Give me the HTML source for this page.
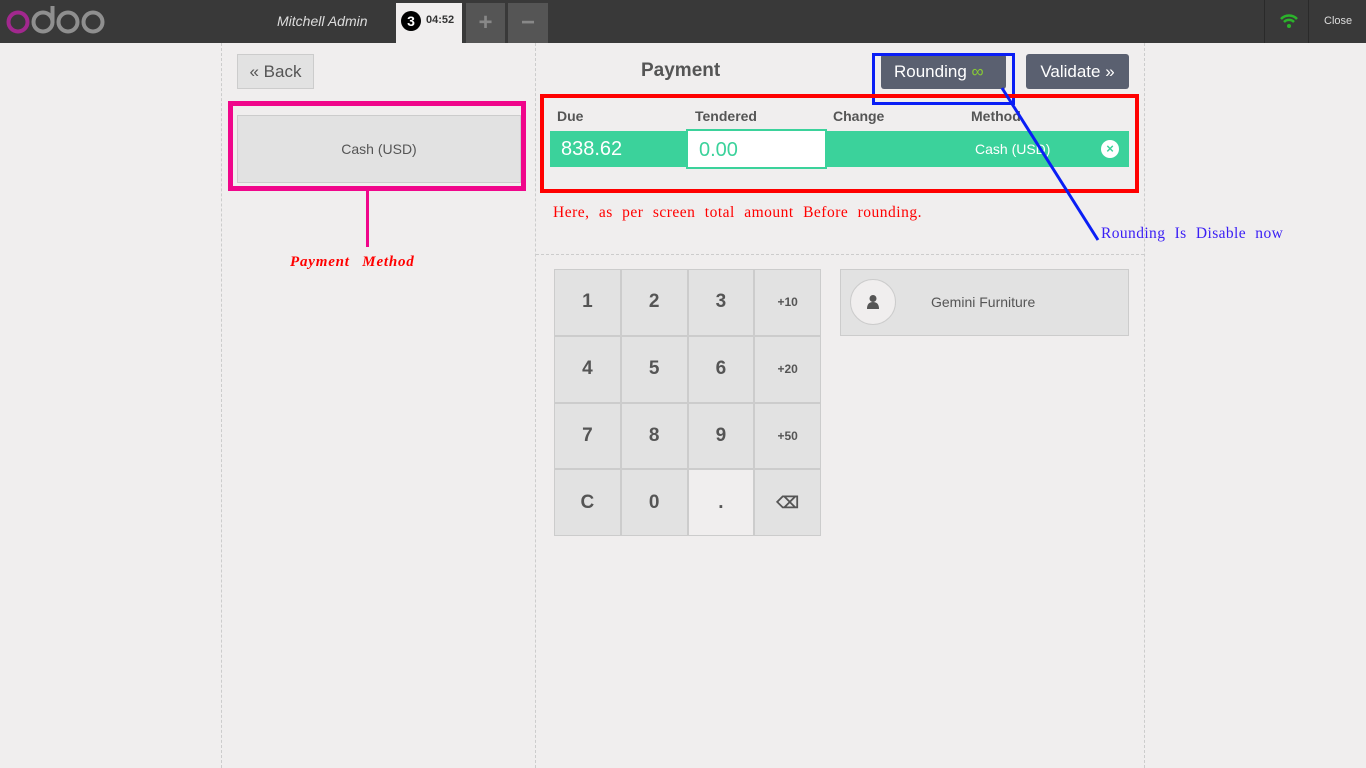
<!DOCTYPE html>
<html><head><style>
*{box-sizing:border-box;margin:0;padding:0}
body{width:1366px;height:768px;background:#f0eeee;font-family:"Liberation Sans",sans-serif;position:relative;overflow:hidden;color:#555}
.a{position:absolute}
.top{left:0;top:0;width:1366px;height:43px;background:#393939}
.key{background:#e2e2e2;border:1px solid #ccc;display:flex;align-items:center;justify-content:center;font-size:19px;font-weight:bold;color:#555}
.serif{font-family:"Liberation Serif",serif}
</style></head><body>
<div class="a top"></div>
<svg class="a" style="left:6px;top:5px" width="100" height="32">
<circle cx="12" cy="17" r="9.5" fill="none" stroke="#a2288e" stroke-width="4"/>
<circle cx="37" cy="17" r="9.5" fill="none" stroke="#8f8f8f" stroke-width="4"/>
<rect x="44.5" y="1" width="4" height="17" fill="#8f8f8f"/>
<circle cx="62" cy="17" r="9.5" fill="none" stroke="#8f8f8f" stroke-width="4"/>
<circle cx="87" cy="17" r="9.5" fill="none" stroke="#8f8f8f" stroke-width="4"/>
</svg>
<div class="a" style="left:277px;top:13px;color:#ddd;font-size:14px;font-style:italic">Mitchell Admin</div>
<div class="a" style="left:396px;top:3px;width:66px;height:40px;background:#f0eeee"></div>
<div class="a" style="left:401px;top:11px;width:20px;height:20px;border-radius:50%;background:#000;color:#fff;font-size:14px;font-weight:bold;text-align:center;line-height:20px">3</div>
<div class="a" style="left:426px;top:14px;font-size:11px;font-weight:bold;color:#333">04:52</div>
<div class="a" style="left:466px;top:3px;width:39px;height:40px;background:#555;color:#888;font-size:24px;font-weight:bold;text-align:center;line-height:40px">+</div>
<div class="a" style="left:508px;top:3px;width:40px;height:40px;background:#555;color:#888;font-size:24px;font-weight:bold;text-align:center;line-height:40px">−</div>
<div class="a" style="left:1264px;top:0;width:1px;height:43px;background:#2a2a2a"></div>
<div class="a" style="left:1308px;top:0;width:1px;height:43px;background:#2a2a2a"></div>
<svg class="a" style="left:1279px;top:13px" width="20" height="16"><path d="M2 6 A11 11 0 0 1 18 6" fill="none" stroke="#2bb32b" stroke-width="2.5"/><path d="M5 9 A7 7 0 0 1 15 9" fill="none" stroke="#2bb32b" stroke-width="2.5"/><circle cx="10" cy="13" r="2" fill="#2bb32b"/></svg>
<div class="a" style="left:1324px;top:15px;color:#ddd;font-size:11px">Close</div>
<div class="a" style="left:221px;top:43px;height:725px;border-left:1px dashed #ccc"></div>
<div class="a" style="left:535px;top:43px;height:725px;border-left:1px dashed #ccc"></div>
<div class="a" style="left:1144px;top:43px;height:725px;border-left:1px dashed #ccc"></div>
<div class="a" style="left:536px;top:254px;width:608px;border-top:1px dashed #ccc"></div>
<div class="a" style="left:237px;top:54px;width:77px;height:35px;background:#e2e2e2;border:1px solid #ccc;font-size:17px;line-height:33px;text-align:center">« Back</div>
<div class="a" style="left:641px;top:60px;font-size:19px;font-weight:bold">Payment</div>
<div class="a" style="left:881px;top:54px;width:125px;height:35px;background:#5a6070;border-radius:3px;color:#fff;font-size:17px;line-height:35px;padding-left:13px">Rounding <span style="color:#8c3">∞</span></div>
<div class="a" style="left:1026px;top:54px;width:103px;height:35px;background:#5a6070;border-radius:3px;color:#fff;font-size:17px;line-height:35px;text-align:center">Validate »</div>
<div class="a" style="left:872px;top:53px;width:143px;height:52px;border:3px solid #0a1ef5"></div>
<div class="a" style="left:237px;top:115px;width:284px;height:68px;background:#e2e2e2;border:1px solid #ccc;font-size:14px;text-align:center;line-height:66px">Cash (USD)</div>
<div class="a" style="left:228px;top:101px;width:298px;height:90px;border:5px solid #f0068b"></div>
<div class="a" style="left:366px;top:191px;width:3px;height:56px;background:#f0068b"></div>
<div class="a serif" style="left:290px;top:254px;color:#f00;font-size:15px;font-style:italic;font-weight:bold;word-spacing:8px;letter-spacing:0.8px">Payment Method</div>
<div class="a" style="left:557px;top:108px;font-size:14px;font-weight:bold">Due</div>
<div class="a" style="left:695px;top:108px;font-size:14px;font-weight:bold">Tendered</div>
<div class="a" style="left:833px;top:108px;font-size:14px;font-weight:bold">Change</div>
<div class="a" style="left:971px;top:108px;font-size:14px;font-weight:bold">Method</div>
<div class="a" style="left:550px;top:131px;width:579px;height:36px;background:#3bd29b"></div>
<div class="a" style="left:561px;top:138px;font-size:20px;color:#fff">838.62</div>
<div class="a" style="left:686px;top:129px;width:141px;height:40px;background:#fff;border:2px solid #3bd29b;font-size:20px;color:#3bd29b;padding:8px 11px">0.00</div>
<div class="a" style="left:975px;top:141px;font-size:14px;color:#fff">Cash (USD)</div>
<div class="a" style="left:1101px;top:140px;width:18px;height:18px;border-radius:50%;background:#fff;color:#3bd29b;font-size:13px;font-weight:bold;text-align:center;line-height:18px">×</div>
<div class="a" style="left:540px;top:94px;width:599px;height:99px;border:4px solid #f00"></div>
<div class="a serif" style="left:553px;top:204px;color:#f00;font-size:15.5px;word-spacing:5px;letter-spacing:0.5px">Here, as per screen total amount Before rounding.</div>
<svg class="a" style="left:0;top:0" width="1366" height="768"><line x1="1002" y1="88" x2="1098" y2="240" stroke="#0a1ef5" stroke-width="3"/></svg>
<div class="a serif" style="left:1101px;top:225px;color:#3a1ef5;font-size:15.5px;word-spacing:5px;letter-spacing:0.4px">Rounding Is Disable now</div>
<div class="a" style="left:554px;top:269px;width:267px;height:267px;display:grid;grid-template-columns:repeat(4,1fr);grid-template-rows:repeat(4,1fr)">
<div class="key">1</div><div class="key">2</div><div class="key">3</div><div class="key" style="font-size:12px">+10</div>
<div class="key">4</div><div class="key">5</div><div class="key">6</div><div class="key" style="font-size:12px">+20</div>
<div class="key">7</div><div class="key">8</div><div class="key">9</div><div class="key" style="font-size:12px">+50</div>
<div class="key">C</div><div class="key">0</div><div class="key" style="background:#f0eeee">.</div><div class="key" style="font-size:16px">⌫</div>
</div>
<div class="a" style="left:840px;top:269px;width:289px;height:67px;background:#e2e2e2;border:1px solid #ccc"></div>
<div class="a" style="left:850px;top:279px;width:46px;height:46px;border-radius:50%;background:#f0eeee;border:1px solid #ccc"></div>
<svg class="a" style="left:866px;top:294px" width="14" height="16"><circle cx="7" cy="4.5" r="3.5" fill="#555"/><path d="M1 15 Q1 8 7 8 Q13 8 13 15Z" fill="#555"/></svg>
<div class="a" style="left:931px;top:294px;font-size:14px">Gemini Furniture</div>
</body></html>
